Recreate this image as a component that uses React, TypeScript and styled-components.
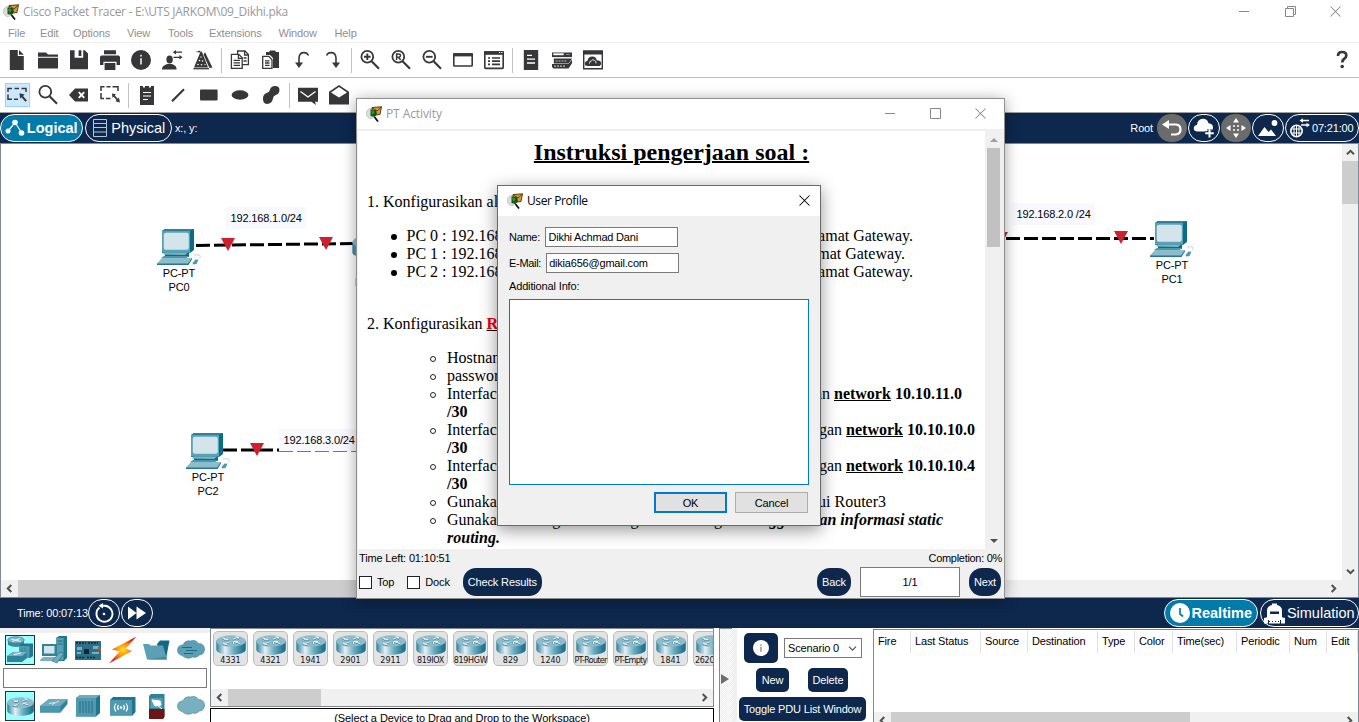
import React from "react";
import styled, { createGlobalStyle, css } from "styled-components";

const NAVY = "#0d274d";
const BLUE = "#027bab";
const FACE = "#f0f0f0";
const INK = "#37373a";

const GlobalStyle = createGlobalStyle`
  *, *::before { box-sizing: border-box; }
  body {
    margin: 0;
    width: 1359px;
    height: 722px;
    overflow: hidden;
    background: #fff;
    font: 11px/14px "Liberation Sans", Arial, sans-serif;
    letter-spacing: -0.15px;
    color: #000;
  }
  svg { display: block; flex: none; }
`;

const Screen = styled.div`
  position: relative;
  display: flex;
  flex-direction: column;
  width: 1359px;
  height: 722px;
  overflow: hidden;
`;

/* ---------- window chrome ---------- */

const TitleBar = styled.header`
  display: flex;
  align-items: center;
  flex: none;
  height: 25px;
  padding: 0 0 2px 3px;
  gap: 4px;
`;

const TitleText = styled.span<{ $active?: boolean; $spacing?: string }>`
  flex: 1;
  font: 12px/16px "Open Sans", "Noto Sans", sans-serif;
  letter-spacing: ${(p) => p.$spacing ?? "-0.3px"};
  white-space: nowrap;
  color: ${(p) => (p.$active ? "#000" : "#999")};
`;

const Caption = styled.div<{ $gap: number; $right: number }>`
  display: flex;
  gap: ${(p) => p.$gap}px;
  padding-right: ${(p) => p.$right}px;
`;

const MenuBar = styled.nav`
  display: flex;
  height: 18px;
  padding: 1px 8px 0;
  border-bottom: 1px solid #eee;
  color: #8f8f8f;
  letter-spacing: -0.12px;
  flex: none;
`;

const MenuItem = styled.span<{ $w: number }>`
  width: ${(p) => p.$w}px;
  flex: none;
`;

const ToolBar = styled.div<{ $last?: boolean }>`
  display: flex;
  flex: none;
  height: ${(p) => (p.$last ? 34 : 35)}px;
  padding-left: 1.5px;
  border-bottom: ${(p) => (p.$last ? "0" : "1px solid #bdbdbd")};
`;

const Slot = styled.div<{ $on?: boolean; $push?: boolean }>`
  display: flex;
  align-items: center;
  justify-content: center;
  width: 31px;
  height: 34px;
  ${(p) => p.$push && css`margin-left: auto; margin-right: 1.5px;`}
  ${(p) =>
    p.$on &&
    css`
      width: 25px;
      height: 24px;
      margin: 5px 3px;
      background: #cce8ff;
      border: 1px solid #99d1ff;
    `}
`;

const Divider = styled.i`
  width: 1px;
  height: 25px;
  margin: 5px 2.5px;
  background: #c2c2c2;
`;

/* ---------- navy bars ---------- */

const NavyBar = styled.div<{ $top?: boolean }>`
  display: flex;
  align-items: center;
  height: 30px;
  background: ${NAVY};
  color: #fff;
  flex: none;
  ${(p) => p.$top && css`height: 31px; border-top: 1px solid #a0a0a0;`}
`;

const Pill = styled.div<{ $w: number; $fill?: string; $bold?: boolean; $ml?: number; $plain?: boolean; $small?: boolean }>`
  display: flex;
  align-items: center;
  justify-content: center;
  gap: 1.5px;
  width: ${(p) => p.$w}px;
  height: 28px;
  margin-left: ${(p) => p.$ml ?? 2}px;
  flex: none;
  border: ${(p) => (p.$plain ? "0" : "1px solid #fff")};
  border-radius: 14px;
  background: ${(p) => p.$fill ?? "transparent"};
  font-size: ${(p) => (p.$small ? 11 : 14.5)}px;
  font-weight: ${(p) => (p.$bold ? 700 : 400)};
  letter-spacing: ${(p) => (p.$small ? "-0.15px" : "0")};
  white-space: nowrap;
`;

const BarText = styled.span<{ $ml?: number }>`
  margin-left: ${(p) => p.$ml ?? 0}px;
`;

/* ---------- workspace ---------- */

const WorkspaceFrame = styled.main`
  display: grid;
  grid-template-columns: 1fr 16px;
  grid-template-rows: 1fr 17px;
  height: 455px;
  flex: none;
  border: 1px solid #828790;
`;

const Canvas = styled.div`
  position: relative;
  overflow: hidden;
`;

const Links = styled.svg`
  position: absolute;
  left: 0;
  top: 0;
`;

const Node = styled.div<{ $x: number; $y: number }>`
  position: absolute;
  left: ${(p) => p.$x}px;
  top: ${(p) => p.$y}px;
  width: 44px;
  text-align: center;
`;

const NetLabel = styled.div<{ $x: number; $y: number; $w: number }>`
  position: absolute;
  left: ${(p) => p.$x}px;
  top: ${(p) => p.$y}px;
  width: ${(p) => p.$w}px;
  height: 22px;
  padding-left: 4.5px;
  line-height: 22px;
  background: #f8f8ff;
  white-space: nowrap;
`;

const Track = styled.div<{ $v?: boolean; $w?: number }>`
  display: flex;
  flex-direction: ${(p) => (p.$v ? "column" : "row")};
  align-items: center;
  justify-content: space-between;
  background: ${FACE};
  overflow: hidden;
  ${(p) => p.$w && css`width: ${p.$w}px;`}
`;

const Thumb = styled.div<{ $len: number; $v?: boolean; $color?: string }>`
  flex: none;
  background: ${(p) => p.$color ?? "#cdcdcd"};
  ${(p) => (p.$v ? css`width: 100%; height: ${p.$len}px;` : css`height: 100%; width: ${p.$len}px;`)}
  ${(p) => (p.$v ? "margin-bottom: auto;" : "margin-right: auto;")}
`;

const ArrowBox = styled.div`
  display: flex;
  align-items: center;
  justify-content: center;
  width: 17px;
  height: 17px;
  flex: none;
`;

/* ---------- bottom dock ---------- */

const Dock = styled.section`
  display: flex;
  flex: none;
  height: 94px;
  background: #fff;
`;

const Categories = styled.div`
  display: flex;
  flex-direction: column;
  width: 210px;
  border-top: 5px solid ${FACE};
  padding: 2px 3px 0;
  flex: none;
`;

const IconRow = styled.div`
  display: flex;
  gap: 4px;
  padding-left: 2px;
  margin-bottom: 3px;
  flex: none;
`;

const Cat = styled.div<{ $on?: boolean }>`
  display: flex;
  align-items: center;
  justify-content: center;
  width: 30.2px;
  height: 30px;
  ${(p) => p.$on && css`background: #9ff; border: 1px solid #234;`}
`;

const SearchBox = styled.div`
  height: 20px;
  border: 1px solid #7a7a7a;
  margin-bottom: 3px;
  flex: none;
`;

const DevicePane = styled.div`
  display: flex;
  flex-direction: column;
  width: 504px;
  flex: none;
`;

const DeviceList = styled.div`
  display: flex;
  flex-direction: column;
  justify-content: space-between;
  height: 79px;
  border: 1px solid #828790;
  flex: none;
`;

const DeviceRow = styled.div`
  display: flex;
  gap: 5px;
  padding: 2px 0 0 2px;
  overflow: hidden;
`;

const Device = styled.div`
  display: flex;
  flex-direction: column;
  align-items: center;
  width: 35px;
  height: 35px;
  padding-top: 3px;
  flex: none;
  border: 1.5px solid #bcbcbc;
  border-radius: 5px;
  background: #e3e3e3;
`;

const DeviceName = styled.span<{ $tight?: boolean; $wide?: boolean }>`
  margin-top: 1px;
  font: 8px/9px "DejaVu Sans", sans-serif;
  letter-spacing: ${(p) => (p.$tight ? "-0.7px" : p.$wide ? "-0.3px" : "0")};
  white-space: nowrap;
  color: #111;
`;

const DeviceHint = styled.div`
  height: 20px;
  margin-top: 1px;
  border: 1px solid #000;
  padding-top: 2px;
  text-align: center;
  letter-spacing: -0.08px;
`;

const Splitter = styled.div`
  display: flex;
  align-items: center;
  width: 13px;
  margin-left: 5px;
  padding: 6px 0 0 1px;
  flex: none;
  border-left: 1px solid #828790;
  border-top: 1px solid #828790;
  background: repeating-conic-gradient(#fff 0 25%, #ececec 0 50%) 0 0 / 2px 2px;
`;

const Gutter = styled.div`
  width: 5px;
  flex: none;
  background: ${FACE};
`;

const PduControls = styled.div`
  display: flex;
  flex-direction: column;
  width: 135px;
  padding: 5px 0 0 2px;
  margin-left: 1px;
  flex: none;
`;

const PduRow = styled.div<{ $ml: number; $gap?: number; $mb?: number }>`
  display: flex;
  align-items: center;
  gap: ${(p) => p.$gap ?? 0}px;
  margin: 0 0 ${(p) => p.$mb ?? 5}px ${(p) => p.$ml}px;
`;

const NavyButton = styled.div<{ $w: number; $h?: number; $r?: number; $ml?: number }>`
  display: flex;
  align-items: center;
  justify-content: center;
  width: ${(p) => p.$w}px;
  height: ${(p) => p.$h ?? 24}px;
  margin-left: ${(p) => p.$ml ?? 0}px;
  flex: none;
  border-radius: ${(p) => p.$r ?? 5}px;
  background: ${NAVY};
  color: #fff;
  white-space: nowrap;
`;

const Combo = styled.div`
  display: flex;
  align-items: center;
  justify-content: space-between;
  width: 78px;
  height: 20px;
  padding: 0 4px 0 3px;
  border: 1px solid #7a7a7a;
  white-space: nowrap;
`;

const PduTable = styled.div`
  display: flex;
  flex-direction: column;
  justify-content: space-between;
  width: 486px;
  height: 101px;
  flex: none;
  margin-top: 1px;
  border: 1px solid #828790;
`;

const HeadRow = styled.div`
  display: flex;
  height: 22px;
  margin-top: 1px;
`;

const HeadCell = styled.div<{ $w: number }>`
  width: ${(p) => p.$w}px;
  flex: none;
  padding: 3px 0 0 4px;
  border-right: 1px solid #e0e0e0;
  white-space: nowrap;
`;

/* ---------- activity window ---------- */

const ActivityWindow = styled.div`
  position: absolute;
  left: 356px;
  top: 98px;
  width: 649px;
  height: 501px;
  display: flex;
  flex-direction: column;
  border: 1px solid #8f8f8f;
  background: ${FACE};
  box-shadow: 0 2px 14px rgba(0, 0, 0, 0.36);
`;

const WindowTitle = styled.div<{ $h: number; $pl: number }>`
  display: flex;
  align-items: center;
  gap: 4px;
  height: ${(p) => p.$h}px;
  padding: 0 0 1px ${(p) => p.$pl}px;
  background: #fff;
  flex: none;
`;

const ActivityBody = styled.div`
  display: flex;
  height: 418px;
  margin: 2px 1px 0;
  flex: none;
`;

const Doc = styled.article`
  width: 627px;
  padding: 7px 10px 0 9px;
  overflow: hidden;
  background: #fff;
  font: 16px/18px "Liberation Serif", "Times New Roman", serif;
  letter-spacing: 0;
`;

const DocTitle = styled.h1`
  margin: 0 0 27px 1px;
  font-size: 24px;
  line-height: 28px;
  text-align: center;
  text-decoration: underline;
  text-decoration-thickness: 2px;
  letter-spacing: 0;
`;

const Line = styled.div<{ $indent?: number; $mb?: number; $tail?: number; $mark?: "disc" | "ring" }>`
  position: relative;
  display: flex;
  justify-content: space-between;
  height: 18px;
  margin-bottom: ${(p) => p.$mb ?? 0}px;
  padding-left: ${(p) => p.$indent ?? 0}px;
  padding-right: ${(p) => p.$tail ?? 0}px;
  white-space: pre;
  &::before {
    position: absolute;
    top: 7px;
    left: ${(p) => (p.$indent ?? 0) - (p.$mark === "ring" ? 17 : 16)}px;
    ${(p) => p.$mark && css`content: "";`}
    width: ${(p) => (p.$mark === "ring" ? 6 : 5.5)}px;
    height: ${(p) => (p.$mark === "ring" ? 6 : 5.5)}px;
    border-radius: 50%;
    border: ${(p) => (p.$mark === "ring" ? "1px solid #222" : "3px solid #000")};
  }
`;

const Accent = styled.b`
  color: #e00;
  text-decoration: underline;
  text-decoration-color: #000;
`;

const ActivityFooter = styled.div`
  display: flex;
  flex-direction: column;
  padding: 2px 2px 0;
`;

const FootRow = styled.div<{ $tall?: boolean }>`
  display: flex;
  align-items: center;
  white-space: nowrap;
  ${(p) => p.$tall && css`height: 30px; margin-top: 2px; padding-right: 1px;`}
`;

const Push = styled.span`
  margin-left: auto;
`;

const Completion = styled(Push)`
  letter-spacing: -0.3px;
`;

const Check = styled.span<{ $ml?: number }>`
  width: 13px;
  height: 13px;
  margin: 0 5px 0 ${(p) => p.$ml ?? 0}px;
  border: 1px solid #222;
  background: #fff;
`;

const PageBox = styled.div`
  width: 100px;
  height: 30px;
  margin: 0 9px;
  border: 1px solid #7a7a7a;
  background: #fff;
  text-align: center;
  line-height: 28px;
`;

/* ---------- profile dialog ---------- */

const ProfileDialog = styled.div`
  position: absolute;
  left: 497px;
  top: 185px;
  width: 324px;
  height: 341px;
  border: 1px solid #6a6a6a;
  background: ${FACE};
  box-shadow: 0 4px 16px rgba(0, 0, 0, 0.42);
`;

const Form = styled.div`
  display: flex;
  flex-direction: column;
  padding: 11px 11px 0;
`;

const Field = styled.label`
  display: flex;
  align-items: center;
  height: 20px;
  margin-bottom: 6px;
  letter-spacing: -0.3px;
`;

const Input = styled.div<{ $ml: number }>`
  width: 133px;
  height: 20px;
  margin-left: ${(p) => p.$ml}px;
  padding-left: 2px;
  line-height: 18px;
  letter-spacing: -0.2px;
  border: 1px solid #7a7a7a;
  background: #fff;
`;

const Area = styled.div`
  width: 300px;
  height: 186px;
  margin: 6px 0 7px;
  border: 1px solid #0078d7;
  background: #fff;
`;

const Buttons = styled.div`
  display: flex;
  justify-content: flex-end;
  gap: 8px;
  padding-right: 1px;
`;

const Button = styled.div<{ $primary?: boolean }>`
  width: 73px;
  height: 21px;
  border: ${(p) => (p.$primary ? "2px solid #0078d7" : "1px solid #adadad")};
  line-height: ${(p) => (p.$primary ? 18 : 20)}px;
  background: #e1e1e1;
  text-align: center;
`;

/* ---------- drawings ---------- */

const Tool = ({ children }: { children: React.ReactNode }) => (
  <svg width="20" height="20" viewBox="0 0 20 20" fill={INK} overflow="visible">
    {children}
  </svg>
);

const Lens = ({ children }: { children?: React.ReactNode }) => (
  <Tool>
    <circle cx="7.3" cy="6.8" r="5.9" fill="none" stroke={INK} strokeWidth="1.8" />
    <path d="M11.6 11.2L19 18.8" stroke={INK} strokeWidth="2.1" />
    {children}
  </Tool>
);

const topTools: React.ReactNode[] = [
  <Tool><path d="M2.8 0h8v6h6v14h-14zM12 0l4.8 4.8H12z" /></Tool>,
  <Tool><path d="M0 2.4h8l2 2h10v2.4H0zM0 7.8h20v10.6H0z" /></Tool>,
  <Tool><path d="M1 .2h4.6v7.6h8.6V.2h1.6L19 3.4v15.8H1zM9.6.2h2.8V6H9.6z" /></Tool>,
  <Tool><path d="M4 .2h12v4H4zM1.3 5.4h17.4L20 6.8v8.2h-3.4v-3.3H3.4V15H0V6.8zM4.6 13h10.8v7H4.6z" /></Tool>,
  <Tool>
    <circle cx="10" cy="10" r="10" />
    <path d="M9.1 4.8h1.8v1.8H9.1zM9.1 8.2h1.8v6.4H9.1z" fill="#ddd" />
  </Tool>,
  <Tool>
    <ellipse cx="7.6" cy="9.6" rx="3.2" ry="4" />
    <path d="M0 19.6c0-4 3-4.6 5.6-5.6h4c2.600 1 5 1.600 5 5.600z" />
    <path d="M13 2.200h7M11.500 7.300h6.500" stroke={INK} strokeWidth="1.300" />
    <path d="M10.800 2.200l3.200-2.200v4.400zM20.600 7.300l-3.200-2.200v4.400z" />
  </Tool>,
  <Tool>
    <path d="M7.600 1.500L1 17.500h14L8.800 1.500z" />
    <path d="M10.500 4.500l1.600-2.300 7.400 15.600h-3.200zM2.600 2l4.600-1.600v2.200z" />
    <path d="M.4 18.700h15.600" stroke={INK} strokeWidth="1.300" />
    <g fill="#fff"><circle cx="8" cy="7" r=".7" /><circle cx="6.500" cy="10.500" r=".8" /><circle cx="9.600" cy="11" r=".8" /><circle cx="5" cy="14.500" r=".8" /><circle cx="8.500" cy="14.800" r=".8" /><circle cx="12" cy="14.600" r=".7" /></g>
  </Tool>,
  null,
  <Tool>
    <g fill="#fff" stroke={INK} strokeWidth="1.300">
      <path d="M7.600 1h7.400l3.400 3.600v10H7.600z" />
      <path d="M1.400 4.300h7.400l3.400 3.400v10.600H1.400z" />
      <path d="M14.600 1v4h4M8.400 4.500v3.800h4M3.600 10.300h6.400M3.600 12.800h6.400M3.600 15.300h6.400M13.600 8h3M13.600 11h3" fill="none" />
    </g>
  </Tool>,
  <Tool>
    <path d="M5 2h3l1-1.600h5L15 2h3v16h-6V8L9 5H5z" />
    <g fill="#fff" stroke={INK} strokeWidth="1.300"><path d="M1.700 6.300h6l3.300 3.400v8.600H1.700z" /><path d="M4 10.800h4.500M4 13h4.500M4 15.300h4.500" /></g>
  </Tool>,
  <Tool><path d="M16.500 5.500C14.500 1.500 7.500 1 7 8v6" fill="none" stroke={INK} strokeWidth="1.600" /><path d="M3 12.500h8l-4 5.500z" /></Tool>,
  <Tool><path d="M3.500 5.500C5.500 1.500 12.500 1 13 8v6" fill="none" stroke={INK} strokeWidth="1.600" /><path d="M9 12.500h8l-4 5.500z" /></Tool>,
  null,
  <Lens><path d="M4 6.800h6.600M7.300 3.500v6.600" stroke={INK} strokeWidth="1.900" /></Lens>,
  <Lens><path d="M5.600 10V4h2.200q1.700 0 1.700 1.600T7.800 7.200H5.600M7.600 7.200L9.600 10" fill="none" stroke={INK} strokeWidth="1.500" /></Lens>,
  <Lens><path d="M4 6.800h6.600" stroke={INK} strokeWidth="1.900" /></Lens>,
  <Tool><rect x=".8" y="4" width="18.400" height="12" rx=".8" fill="#fff" stroke={INK} strokeWidth="1.600" /><path d="M0 3.200h20v3.200H0z" /></Tool>,
  <Tool>
    <rect x=".8" y="2" width="18.400" height="16.400" rx=".8" fill="#fff" stroke={INK} strokeWidth="1.600" />
    <path d="M0 1.200h20v3.600H0z" />
    <path d="M4 8h2M8 8h8M4 11.200h2M8 11.200h8M4 14.400h2M8 14.400h8" stroke={INK} strokeWidth="1.700" />
    <path d="M15 2.500h1.200M17.200 2.500h1.200" stroke="#fff" strokeWidth="1" />
  </Tool>,
  null,
  <Tool><path d="M2.800 0h14.400v20H2.800z" /><path d="M6 5.300h5M6 9.200h8M6 13h8" stroke="#fff" strokeWidth="1.300" /></Tool>,
  <Tool>
    <path d="M0 2.500h20v4.600H0z" />
    <path d="M1.500 3.600h10v1.400h-10zM14 4.500h4" fill="#fff" stroke="#fff" strokeWidth=".4" />
    <path d="M1.800 8.400h18.200l-3.500 5H1.800zM0 14h16.500L20 9.500v3.700L16.500 18.500H1.500L0 17z" />
    <path d="M3.500 11h11M2 16.200h12" stroke="#bbb" strokeWidth="1.200" strokeDasharray="2 1" />
  </Tool>,
  <Tool>
    <path d="M.7 1.200h18.600v17.600H.7z" fill="#fff" stroke={INK} strokeWidth="1.400" />
    <path d="M0 .5h20v4H0z" />
    <path d="M4.500 16q-2.800 0-2.800-2.400 0-2.400 2.600-2.600Q5.500 6.400 9.500 6.600q3.600.2 4.200 3.600 4.400.2 4.400 3 0 2.800-3 2.800z" />
    <path d="M6.500 13.500q-.2-2.500 2-2.700 1-2 3-.4 2 .6 1.500 3" fill="none" stroke="#fff" strokeWidth=".9" />
  </Tool>,
];

const editTools: React.ReactNode[] = [
  <Tool>
    <path d="M1 7V3.500h4M7.500 3.500h4.500M14.500 3.500h4.500V7M1 9.500v4.800h4M7 14.300h4" fill="none" stroke={INK} strokeWidth="1.500" />
    <path d="M12.500 8.300l5.200 1.300-1.700 1.300 4 4.600-1.600 1.300-4-4.600-1.300 1.600z" />
  </Tool>,
  <Lens />,
  <Tool>
    <path d="M0 10l6-6.500h13v13H6z" />
    <path d="M9.800 7.200l5.400 5.600M15.200 7.200l-5.400 5.600" stroke="#fff" strokeWidth="1.900" />
  </Tool>,
  <Tool>
    <path d="M1 6V1.800h3.500M6.500 1.800h4M12.500 1.800h5.500V6M1 8v5.500h3M6 13.500h4.500" fill="none" stroke={INK} strokeWidth="1.500" />
    <path d="M12 8.500l4 .8-1.200 1.200 3 3.300 1.200-1.200.9 4.800-4.500-1.200 1.200-1.200-3-3.300-1.100 1.300z" />
  </Tool>,
  null,
  <Tool>
    <path d="M3 1h3v1.500h2V1h4v1.500h2V1h3v19H3z" />
    <path d="M6 7.500h8M6 11h8M6 14.500h5" stroke="#fff" strokeWidth="1.200" />
  </Tool>,
  <Tool><path d="M4 16.200L16 4.300" stroke={INK} strokeWidth="2.200" /></Tool>,
  <Tool><rect x="1" y="4.600" width="17.600" height="10.800" rx=".8" /></Tool>,
  <Tool><ellipse cx="10" cy="10" rx="8.400" ry="4.700" /></Tool>,
  <Tool><path d="M2 13Q2 9 6.500 7.500 8.600 7 9 4.500 10 1 14 1q5 0 4.400 5-.6 3.300-4 4.200-2 .6-2.400 3.300Q11 18.500 6 19 1.500 18.500 2 13z" /></Tool>,
  null,
  <Tool>
    <path d="M0 2.800h20v14h-3l1 3.200-4.600-3.200H0z" />
    <path d="M2.500 6.500L10 12l7.500-5.500" fill="none" stroke="#fff" strokeWidth="1.400" />
  </Tool>,
  <Tool>
    <path d="M0 6.800L10 0l10 6.800V19.500H0z" />
    <path d="M2 7.500L10 2l8 5.500-8 5z" fill="#fff" />
  </Tool>,
];

const AppMark = () => (
  <svg width="16" height="16" viewBox="0 0 16 16">
    <ellipse cx="4.800" cy="7.500" rx="4.500" ry="5" fill="#dcdcdc" stroke="#b9bdb9" strokeWidth=".8" />
    <path d="M6 1.500L15.500.8 14 8.500 6.500 9.500z" fill="#d49a35" stroke="#4a3108" strokeWidth=".9" />
    <path d="M6 1.500l5 3.500L15.500 1" fill="none" stroke="#4a3108" strokeWidth=".8" />
    <path d="M4.500 3.500l5.500.5 1 4-2.500 3-4-1z" fill="#17501a" />
    <path d="M5 5l2.500-.5 1 2-2 2.500z" fill="#2e9a35" />
    <path d="M8.500 11l3.500 4.500" stroke="#111" strokeWidth="1.800" />
  </svg>
);

const Minimize = () => <svg width="11" height="11"><path d="M0 5.500h10" stroke="#888" /></svg>;
const Cross = ({ color = "#888" }: { color?: string }) => (
  <svg width="11" height="11" viewBox="0 0 11 11"><path d="M.5.500l10 10M10.500.500l-10 10" stroke={color} strokeWidth="1.050" /></svg>
);

const Chevron = ({ turn, color = "#505050" }: { turn: number; color?: string }) => (
  <svg width="9" height="9" viewBox="0 0 9 9">
    <path transform={`rotate(${turn} 4.5 4.5)`} d="M1 6.300L4.500 2.800 8 6.300" fill="none" stroke={color} strokeWidth={color === "#505050" ? 2 : 1.2} />
  </svg>
);

const Pc = () => (
  <svg width="46" height="37" viewBox="0 0 46 37">
    <path d="M5 2l3-2h29v21l-4 3H5z" fill="#0b6c88" />
    <path d="M5 2l3-2h29l-4 2z" fill="#2d8299" />
    <path d="M5 2h28v21.500H5z" fill="#5ba0b4" />
    <rect x="6.800" y="3.800" width="25" height="17" rx="2" fill="#d3e5ea" />
    <path d="M8 24h24v4H8z" fill="#0b6c88" />
    <path d="M5.500 25.500L8 23.500h23l-3 2.500z" fill="#7ab3c4" />
    <path d="M4 29l3-2h25l-2.500 2z" fill="#4b97ad" />
    <path d="M0 34.500L5 29h30l-4 6.500H0z" fill="#8dbccb" />
    <path d="M0 34.500h31l4-5.500v1.500L31.500 36H0z" fill="#23788f" />
    <path d="M37 26c6-1 8 1 5 3.500" fill="none" stroke="#b4ccd4" strokeWidth=".9" />
    <path d="M35.500 34l3-3.500 3 .3-2 4.200-3.500.5z" fill="#4d99b0" />
  </svg>
);

const RouterArt = ({ w = 30, h = 21 }: { w?: number; h?: number }) => (
  <svg width={w} height={h} viewBox="0 0 30 21" preserveAspectRatio="none">
    <defs>
      <linearGradient id="routerSide" x1="0" x2="1">
        <stop offset="0" stopColor="#2c7f9a" />
        <stop offset=".3" stopColor="#e4f1f5" />
        <stop offset=".6" stopColor="#69abc0" />
        <stop offset="1" stopColor="#106a86" />
      </linearGradient>
    </defs>
    <path d="M.3 6v9.500C1 22.500 29 22.500 29.700 15.500V6z" fill="url(#routerSide)" />
    <ellipse cx="15" cy="6.300" rx="14.700" ry="6" fill="#8cbccc" />
    <path d="M6 3.500l6 2M12 3v2.500H8M24 9.500l-6-2M17.500 9.800V7.300H22M17 5l5-2.200M19 2.500l3.500.2-.5 2M13 8L8 10M11.500 10.500L7.500 10l.5-2" fill="none" stroke="#3d8096" strokeWidth="1.500" />
    <path d="M6 3l6 2M12 2.600V5H8M24 9l-6-2M17.500 9.300V6.800H22M17 4.500l5-2.200M19 2l3.500.2-.5 2M13 7.500L8 9.500M11.500 10L7.500 9.500l.5-2" fill="none" stroke="#f2f8fa" strokeWidth="1" />
  </svg>
);

const CloudArt = ({ lines }: { lines?: boolean }) => (
  <svg width="28" height="20" viewBox="0 0 28 20">
    <path d="M5 15.500Q0 14 .6 9.500 1 5 6 5 8 0 13.500 1q5-2 8 2.500 5.500 0 6 5.500 0 5.500-5 6-3 3.500-7 2-5 3-10.500-1.500z" fill={lines ? "#5a9fb4" : "#79b0c1"} stroke="#4b8fa5" strokeWidth=".7" />
    {lines && <path d="M5 7.500h10M9 10.500h11M7 13.500h9" stroke="#1c6c85" strokeWidth="1.200" />}
  </svg>
);

const SwitchArt = () => (
  <svg width="28" height="14" viewBox="0 0 28 14">
    <path d="M0 7L9 0h18.500v5l-7 8.500H0z" fill="#2f849c" />
    <path d="M0 7L9 0h18.500l-7 7z" fill="#6fabbf" />
    <path d="M0 7h20.500v6.500H0z" fill="#4b97ae" />
    <path d="M9 4.500l6-1M12 5.500l7-3.500" stroke="#d8eaef" strokeWidth="1" />
  </svg>
);

const HubArt = () => (
  <svg width="25" height="22" viewBox="0 0 25 22">
    <path d="M0 3l4-3h20v18l-4 3.500H0z" fill="#1f7690" />
    <path d="M0 3l4-3h20l-4 3z" fill="#6fabbf" />
    <path d="M0 3h20v18.500H0z" fill="#5099b0" />
    <path d="M4 6v12M7 6v12M10 6v12M13 6v12M16 6v12" stroke="#1f6a82" strokeWidth=".9" />
  </svg>
);

const categoryIcons = [
  <svg width="28" height="28" viewBox="0 0 28 28">
    <path d="M2 4v5q8 4 16 0V4z" fill="#3a8aa1" /><ellipse cx="10" cy="4" rx="8.300" ry="3.300" fill="#7fb5c6" stroke="#35798d" strokeWidth=".6" />
    <path d="M5 3l10 2.500M14 2.500L6 5.500" stroke="#e7f3f6" />
    <path d="M13 10l3-2.500h11V20l-3 2H13z" fill="#1f7690" /><path d="M13 10h10.500v12H13z" fill="#4f99b0" /><path d="M16 12v9M19 12v9" stroke="#3a8398" />
    <path d="M1 20l6-4h14v6l-5 4H1z" fill="#2f849c" /><path d="M1 20l6-4h14l-5 4z" fill="#78b1c3" /><path d="M8 18.500l7-1.500" stroke="#fff" />
  </svg>,
  <svg width="28" height="28" viewBox="0 0 28 28">
    <path d="M16 2l3-2h8v22l-3 3h-8z" fill="#1f7690" /><path d="M16 2h7.500v22H16z" fill="#5aa0b5" /><path d="M17.500 5h5M17.500 8h5" stroke="#1f6a82" />
    <path d="M2 8h15v12H2z" fill="#2f849c" /><path d="M4 10h10.500v7.500H4z" fill="#d3e5ea" />
    <path d="M0 24l3-3h13l-2.500 4H0z" fill="#7ab3c4" /><path d="M12 25l8-9 4 1.500-7 9.500z" fill="#6fabbf" stroke="#1f6a82" strokeWidth=".6" />
  </svg>,
  <svg width="26" height="19" viewBox="0 0 26 19">
    <path d="M0 0h26v19H0z" fill="#2d6f86" /><path d="M9 8h5v5H9z" fill="#0d2833" /><path d="M1 2h10M13 2h10M1 16.500h8M12 16.500h9" stroke="#0d2833" strokeWidth="1.600" strokeDasharray="2 1" />
    <path d="M2 6h5v3H2zM18 5h6v3h-6zM17 11h7v2h-7zM2 11h4v2H2z" fill="#7bb0c0" /><path d="M23 6h3v4h-3z" fill="#8a6048" />
  </svg>,
  <svg width="28" height="28" viewBox="0 0 28 28">
    <defs><radialGradient id="bolt"><stop offset="0" stopColor="#ffe617" /><stop offset=".5" stopColor="#ff8a10" /><stop offset="1" stopColor="#e0200c" /></radialGradient></defs>
    <path d="M27.500.500L3 13.500l7.500 2L0 27.500l23-12.500-6.500-2.500z" fill="url(#bolt)" />
  </svg>,
  <svg width="27" height="20" viewBox="0 0 27 20">
    <path d="M14 4l3-3.500h9.500L23 19l-5-1z" fill="#106a86" /><path d="M0 4h6l1.500 1.500H20L24 19.500H4z" fill="#5ba0b4" /><path d="M4 19.500h20l-1-3" fill="#3d8da4" />
  </svg>,
  <CloudArt lines />,
];

const deviceClassIcons = [
  <RouterArt w={27} h={19} />,
  <SwitchArt />,
  <HubArt />,
  <svg width="26" height="19" viewBox="0 0 26 19">
    <path d="M0 3l3-3h22.500v15l-3 3.500H0z" fill="#1f7690" /><path d="M0 3h22v15.500H0z" fill="#5099b0" />
    <path d="M6 6.500q-3 4 0 8M8.500 8q-2 2.500 0 5M16 6.500q3 4 0 8M13.500 8q2 2.500 0 5" fill="none" stroke="#fff" strokeWidth="1.200" /><circle cx="11" cy="10.500" r="1.200" fill="#fff" />
  </svg>,
  <svg width="16" height="25" viewBox="0 0 16 25">
    <path d="M0 2l2-2h13.500v22L14 24.500H0z" fill="#2f849c" /><path d="M1.500 4h12v10h-12z" fill="#5aa0b5" /><path d="M3 6l8 1 1 4-6 1zM8 11l5 4" fill="#fff" stroke="#fff" />
    <path d="M0 15h15.500v8L14 25H0z" fill="#6e1515" />
  </svg>,
  <CloudArt />,
];

const menus: [string, number][] = [
  ["File", 32], ["Edit", 33], ["Options", 54], ["View", 41], ["Tools", 41], ["Extensions", 69.5], ["Window", 56], ["Help", 30],
];

const models = ["4331", "4321", "1941", "2901", "2911", "819IOX", "819HGW", "829", "1240", "PT-Router", "PT-Empty", "1841", "2620XM"];

const columns: [string, number][] = [
  ["Fire", 37], ["Last Status", 70], ["Source", 47], ["Destination", 70], ["Type", 37],
  ["Color", 38], ["Time(sec)", 64], ["Periodic", 53], ["Num", 37], ["Edit", 31],
];

const NetworkLinks = () => (
  <Links width="1342" height="435">
    <g stroke="#000" strokeWidth="3" strokeDasharray="14 4" fill="none">
      <path d="M194 101.500L352 99.500" strokeDashoffset="-1" />
      <path d="M222 306h56" />
      <path d="M1005 94.500h148" />
    </g>
    <path d="M278 307.500h78" stroke="#777" strokeDasharray="14 4" />
    <g fill="#d01f2e">
      <path d="M220 94h14l-7 13zM318 93h14l-7 13zM249 299h14l-7 13zM1113 87h14l-7 13zM994 88h13l-6.500 12z" />
    </g>
  </Links>
);

export default function App() {
  return (
    <Screen>
      <GlobalStyle />
      <TitleBar>
        <AppMark />
        <TitleText $spacing="-0.28px">Cisco Packet Tracer - E:\UTS JARKOM\09_Dikhi.pka</TitleText>
        <Caption $gap={34.5} $right={18}>
          <Minimize />
          <svg width="11" height="11"><path d="M.5 2.500h8v8h-8zM2.500 2.500v-2h8v8h-2" fill="none" stroke="#888" /></svg>
          <Cross />
        </Caption>
      </TitleBar>
      <MenuBar>
        {menus.map(([m, w]) => <MenuItem key={m} $w={w}>{m}</MenuItem>)}
      </MenuBar>
      <ToolBar>
        {topTools.map((icon, i) => (icon ? <Slot key={i}>{icon}</Slot> : <Divider key={i} />))}
        <Slot $push>
          <Tool><path d="M6 6q0-4 4-4 4.300 0 4.300 3.500 0 2.200-2.300 3.500-1.700 1-1.700 3.500" fill="none" stroke={INK} strokeWidth="2.700" /><circle cx="10.200" cy="16.500" r="1.800" /></Tool>
        </Slot>
      </ToolBar>
      <ToolBar $last>
        {editTools.map((icon, i) => (icon ? <Slot key={i} $on={i === 0}>{icon}</Slot> : <Divider key={i} />))}
      </ToolBar>
      <NavyBar $top>
        <Pill $w={83} $ml={0} $fill={BLUE} $bold>
          <svg width="20" height="18" viewBox="0 0 20 18" fill="#fff"><path d="M3 12l7-8.500 6.500 10" fill="none" stroke="#fff" strokeWidth="1.200" /><circle cx="10" cy="3.500" r="2.800" /><circle cx="3" cy="12" r="2.500" /><circle cx="16.500" cy="14" r="2.800" /></svg>
          <span>Logical</span>
        </Pill>
        <Pill $w={87}>
          <svg width="18" height="18" viewBox="0 0 18 18" fill="none" stroke="#b9c3d3"><path d="M1.500.5h13v17h-13zM1.500 4.500h13M1.500 8.500h13M1.500 13h13" /></svg>
          <span>Physical</span>
        </Pill>
        <BarText $ml={3}>x:, y:</BarText>
        <Push>Root</Push>
        <Pill $w={30} $ml={4} $fill="#6b6b6b" $plain>
          <svg width="20" height="16" viewBox="0 0 20 16"><path d="M5 4.500h9q4.500.5 4.500 5t-5 5H9" fill="none" stroke="#fff" strokeWidth="2.200" /><path d="M0 4.500L7 0v9z" fill="#fff" /></svg>
        </Pill>
        <Pill $w={32} $ml={1}>
          <svg width="22" height="20" viewBox="0 0 22 20" fill="#fff"><path d="M4 13.500Q.5 13 .8 10 1 7.300 4 7 4.500 1 10 .8q4.500 0 5.500 4.500 4.500.5 4.500 4 0 3.700-4 4.200z" /><path d="M16.500 11v8.500M12.200 15.300h8.600" stroke={NAVY} strokeWidth="4" /><path d="M16.500 11v8.500M12.200 15.300h8.600" stroke="#fff" strokeWidth="2" /></svg>
        </Pill>
        <Pill $w={30} $ml={1} $fill="#6b6b6b" $plain>
          <svg width="20" height="20" viewBox="0 0 20 20" fill="#fff"><path d="M10 0l3 4.500H7zM10 20l3-4.500H7zM0 10l4.500-3v6zM20 10l-4.500-3v6z" /><circle cx="8" cy="8" r="1" /><circle cx="12" cy="8" r="1" /><circle cx="8" cy="12" r="1" /><circle cx="12" cy="12" r="1" /></svg>
        </Pill>
        <Pill $w={32} $ml={1}>
          <svg width="20" height="16" viewBox="0 0 20 16" fill="#fff"><path d="M0 16l6.500-9 4 5 2.500-2.500 5 6.500z" /><circle cx="16.500" cy="3" r="2.900" /></svg>
        </Pill>
        <Pill $w={74} $ml={1} $small>
          <svg width="20" height="20" viewBox="0 0 20 20" fill="none" stroke="#fff"><circle cx="6.500" cy="13" r="5.700" strokeWidth="1.600" /><path d="M1 11h11M1 15h11M6.500 7.500v11M4 8v10M9 8v10" strokeWidth="1" /><path d="M12 2.500h7M11 7h6" strokeWidth="1.500" /><path d="M9.500 2.500l3.500-2.300v4.600zM20 7l-3.500-2.300v4.600z" fill="#fff" stroke="none" /></svg>
          <span>07:21:00</span>
        </Pill>
      </NavyBar>

      <WorkspaceFrame>
        <Canvas>
          <NetworkLinks />
          <Node $x={351} $y={91}><RouterArt w={44} h={24} /></Node>
          <Node $x={351} $y={131}>Router0</Node>
          <Node $x={156} $y={85}><Pc />PC-PT<br />PC0</Node>
          <Node $x={185} $y={289}><Pc />PC-PT<br />PC2</Node>
          <Node $x={1149} $y={77}><Pc />PC-PT<br />PC1</Node>
          <NetLabel $x={225} $y={63} $w={80}>192.168.1.0/24</NetLabel>
          <NetLabel $x={278} $y={285} $w={80}>192.168.3.0/24</NetLabel>
          <NetLabel $x={1011} $y={59} $w={83}>192.168.2.0 /24</NetLabel>
        </Canvas>
        <Track $v>
          <ArrowBox><Chevron turn={0} /></ArrowBox>
          <Thumb $v $len={43} />
          <ArrowBox><Chevron turn={180} /></ArrowBox>
        </Track>
        <Track>
          <ArrowBox><Chevron turn={-90} /></ArrowBox>
          <Thumb $len={986} />
          <ArrowBox><Chevron turn={90} /></ArrowBox>
        </Track>
        <Track />
      </WorkspaceFrame>

      <NavyBar>
        <BarText $ml={17}>Time: 00:07:13</BarText>
        <Pill $w={32} $ml={0}>
          <svg width="20" height="20" viewBox="0 0 20 20"><path d="M5.500 4.500A8 8 0 1 0 11 2.800H6" fill="none" stroke="#fff" strokeWidth="1.900" /><path d="M4.500 2.800L9 0v5.600z" fill="#fff" /><circle cx="10" cy="11" r="1.300" fill="#fff" /></svg>
        </Pill>
        <Pill $w={32} $ml={1}>
          <svg width="18" height="14" viewBox="0 0 18 14" fill="#fff"><path d="M0 .5L8.500 7 0 13.500zM8.500.5L18 7l-9.500 6.500z" /></svg>
        </Pill>
        <Push />
        <Pill $w={94} $fill={BLUE} $bold>
          <svg width="20" height="22" viewBox="0 0 20 22"><circle cx="10" cy="11" r="10" fill="#fff" /><path d="M10 6v6l3 2.500" fill="none" stroke={BLUE} strokeWidth="1.700" /></svg>
          <span>Realtime</span>
        </Pill>
        <Pill $w={99}>
          <svg width="21" height="21" viewBox="0 0 21 21" fill="#fff"><path d="M3 17V7.500Q3 3 8 2V.5h5V2q5 1 5 5.500V17z" /><path d="M0 15l4-1v6.500H0zM21 15l-4-1v6.500h4zM5 16h11v4.500H5z" /><path d="M6 8.500h9v2.500H6z" fill={NAVY} /><path d="M5 18.500h11" stroke={NAVY} strokeDasharray="1 2" /></svg>
          <span>Simulation</span>
        </Pill>
      </NavyBar>

      <Dock>
        <Categories>
          <IconRow>{categoryIcons.map((c, i) => <Cat key={i} $on={i === 0}>{c}</Cat>)}</IconRow>
          <SearchBox />
          <IconRow>{deviceClassIcons.map((c, i) => <Cat key={i} $on={i === 0}>{c}</Cat>)}</IconRow>
        </Categories>
        <DevicePane>
          <DeviceList>
            <DeviceRow>
              {models.map((m) => (
                <Device key={m}><RouterArt w={30} h={20} /><DeviceName $tight={m.length > 6} $wide={m.length === 6}>{m}</DeviceName></Device>
              ))}
            </DeviceRow>
            <Track>
              <ArrowBox><Chevron turn={-90} /></ArrowBox>
              <Thumb $len={93} />
              <ArrowBox><Chevron turn={90} /></ArrowBox>
            </Track>
          </DeviceList>
          <DeviceHint>(Select a Device to Drag and Drop to the Workspace)</DeviceHint>
        </DevicePane>
        <Splitter><svg width="8" height="10"><path d="M0 0l8 5-8 5z" fill="#6c6c6c" /></svg></Splitter>
        <Gutter />
        <PduControls>
          <PduRow $ml={4} $gap={6}>
            <NavyButton $w={34} $h={30}>
              <svg width="16" height="16" viewBox="0 0 16 16"><circle cx="8" cy="8" r="8" fill="#fff" /><path d="M7.200 4.200h1.500v1.500H7.200zM7.200 6.800h1.500v5H7.200z" fill="#8a93a5" /></svg>
            </NavyButton>
            <Combo>Scenario 0<Chevron turn={180} color="#555" /></Combo>
          </PduRow>
          <PduRow $ml={16} $gap={19}><NavyButton $w={33}>New</NavyButton><NavyButton $w={40}>Delete</NavyButton></PduRow>
          <PduRow $ml={-1}><NavyButton $w={127}>Toggle PDU List Window</NavyButton></PduRow>
        </PduControls>
        <PduTable>
          <HeadRow>{columns.map(([name, w]) => <HeadCell key={name} $w={w}>{name}</HeadCell>)}</HeadRow>
          <Track>
            <ArrowBox><Chevron turn={-90} /></ArrowBox>
            <Thumb $len={299} />
            <ArrowBox><Chevron turn={90} /></ArrowBox>
          </Track>
        </PduTable>
      </Dock>

      <ActivityWindow>
        <WindowTitle $h={30} $pl={9}>
          <AppMark />
          <TitleText $spacing="-0.1px">PT Activity</TitleText>
          <Caption $gap={34} $right={18}>
            <Minimize />
            <svg width="11" height="11"><path d="M.5.500h10v10H.5z" fill="none" stroke="#888" /></svg>
            <Cross />
          </Caption>
        </WindowTitle>
        <ActivityBody>
          <Doc>
            <DocTitle>Instruksi pengerjaan soal :</DocTitle>
            <Line $mb={16}>1. Konfigurasikan alamat</Line>
            <Line $mark="disc" $indent={39.5} $tail={62}><span>PC 0 : 192.168.1.2</span><span>alamat Gateway.</span></Line>
            <Line $mark="disc" $indent={39.5} $tail={70}><span>PC 1 : 192.168.2.2</span><span>alamat Gateway.</span></Line>
            <Line $mark="disc" $indent={39.5} $tail={62} $mb={34}><span>PC 2 : 192.168.3.2</span><span>alamat Gateway.</span></Line>
            <Line $mb={16}><span>2. Konfigurasikan <Accent>Router</Accent></span></Line>
            <Line $mark="ring" $indent={80}>Hostname</Line>
            <Line $mark="ring" $indent={80}>password</Line>
            <Line $mark="ring" $indent={80} $tail={13}><span>Interface</span><span>dengan <b><u>network</u> 10.10.11.0</b></span></Line>
            <Line $indent={80}><b>/30</b></Line>
            <Line $mark="ring" $indent={80}><span>Interface</span><span>dengan <b><u>network</u> 10.10.10.0</b></span></Line>
            <Line $indent={80}><b>/30</b></Line>
            <Line $mark="ring" $indent={80}><span>Interface</span><span>dengan <b><u>network</u> 10.10.10.4</b></span></Line>
            <Line $indent={80}><b>/30</b></Line>
            <Line $mark="ring" $indent={80} $tail={89}><span>Gunakan</span><span>melalui Router3</span></Line>
            <Line $mark="ring" $indent={80} $tail={32}><span>Gunakan Routing <b>Static</b> dengan</span><span>dengan <b><i>menggunakan informasi static</i></b></span></Line>
            <Line $indent={80}><b><i>routing.</i></b></Line>
          </Doc>
          <Track $v $w={18}>
            <ArrowBox><svg width="8" height="4"><path d="M0 4l4-4 4 4z" fill="#a0a0a0" /></svg></ArrowBox>
            <Thumb $v $len={99} $color="linear-gradient(90deg, transparent 2px, #c1c1c1 2px 15px, transparent 15px)" />
            <ArrowBox><svg width="8" height="4"><path d="M0 0l4 4 4-4z" fill="#505050" /></svg></ArrowBox>
          </Track>
        </ActivityBody>
        <ActivityFooter>
          <FootRow>Time Left: 01:10:51<Completion>Completion: 0%</Completion></FootRow>
          <FootRow $tall>
            <Check />Top<Check $ml={13} />Dock
            <NavyButton $w={79} $h={28} $r={13} $ml={13}>Check Results</NavyButton>
            <Push><NavyButton $w={34} $h={28} $r={13}>Back</NavyButton></Push>
            <PageBox>1/1</PageBox>
            <NavyButton $w={32} $h={28} $r={13}>Next</NavyButton>
          </FootRow>
        </ActivityFooter>
      </ActivityWindow>

      <ProfileDialog>
        <WindowTitle $h={30} $pl={9}>
          <AppMark />
          <TitleText $active $spacing="-0.4px">User Profile</TitleText>
          <Caption $gap={0} $right={10}><Cross color="#000" /></Caption>
        </WindowTitle>
        <Form>
          <Field>Name:<Input $ml={5.5}>Dikhi Achmad Dani</Input></Field>
          <Field>E-Mail:<Input $ml={5}>dikia656@gmail.com</Input></Field>
          <span>Additional Info:</span>
          <Area />
          <Buttons><Button $primary>OK</Button><Button>Cancel</Button></Buttons>
        </Form>
      </ProfileDialog>
    </Screen>
  );
}
